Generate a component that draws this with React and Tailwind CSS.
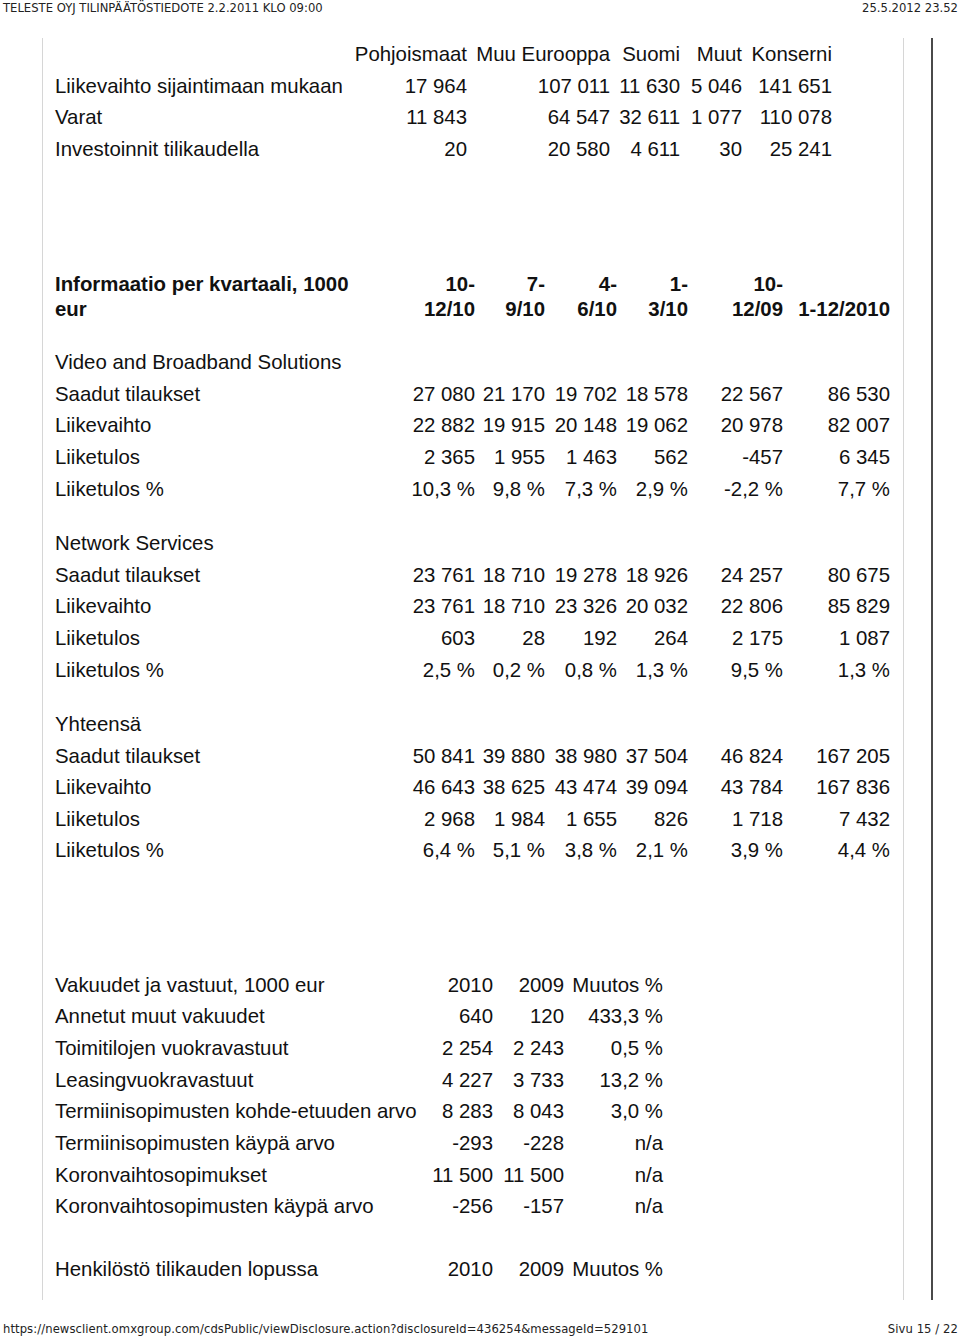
import React from "react";

const t1Cols = "grid-cols-[295px_117px_143px_70px_62px_90px]";
const t2Cols = "grid-cols-[350px_70px_70px_72px_71px_95px_107px]";
const t3Cols = "grid-cols-[370px_68px_71px_99px]";

const table1 = [
  ["Liikevaihto sijaintimaan mukaan", "17 964", "107 011", "11 630", "5 046", "141 651"],
  ["Varat", "11 843", "64 547", "32 611", "1 077", "110 078"],
  ["Investoinnit tilikaudella", "20", "20 580", "4 611", "30", "25 241"],
];

const sections = [
  {
    title: "Video and Broadband Solutions",
    rows: [
      ["Saadut tilaukset", "27 080", "21 170", "19 702", "18 578", "22 567", "86 530"],
      ["Liikevaihto", "22 882", "19 915", "20 148", "19 062", "20 978", "82 007"],
      ["Liiketulos", "2 365", "1 955", "1 463", "562", "-457", "6 345"],
      ["Liiketulos %", "10,3 %", "9,8 %", "7,3 %", "2,9 %", "-2,2 %", "7,7 %"],
    ],
  },
  {
    title: "Network Services",
    rows: [
      ["Saadut tilaukset", "23 761", "18 710", "19 278", "18 926", "24 257", "80 675"],
      ["Liikevaihto", "23 761", "18 710", "23 326", "20 032", "22 806", "85 829"],
      ["Liiketulos", "603", "28", "192", "264", "2 175", "1 087"],
      ["Liiketulos %", "2,5 %", "0,2 %", "0,8 %", "1,3 %", "9,5 %", "1,3 %"],
    ],
  },
  {
    title: "Yhteensä",
    rows: [
      ["Saadut tilaukset", "50 841", "39 880", "38 980", "37 504", "46 824", "167 205"],
      ["Liikevaihto", "46 643", "38 625", "43 474", "39 094", "43 784", "167 836"],
      ["Liiketulos", "2 968", "1 984", "1 655", "826", "1 718", "7 432"],
      ["Liiketulos %", "6,4 %", "5,1 %", "3,8 %", "2,1 %", "3,9 %", "4,4 %"],
    ],
  },
];

const table3 = [
  ["Vakuudet ja vastuut, 1000 eur", "2010", "2009", "Muutos %"],
  ["Annetut muut vakuudet", "640", "120", "433,3 %"],
  ["Toimitilojen vuokravastuut", "2 254", "2 243", "0,5 %"],
  ["Leasingvuokravastuut", "4 227", "3 733", "13,2 %"],
  ["Termiinisopimusten kohde-etuuden arvo", "8 283", "8 043", "3,0 %"],
  ["Termiinisopimusten käypä arvo", "-293", "-228", "n/a"],
  ["Koronvaihtosopimukset", "11 500", "11 500", "n/a"],
  ["Koronvaihtosopimusten käypä arvo", "-256", "-157", "n/a"],
];

function Row({ cols, cells }) {
  return (
    <div className={`grid ${cols} h-[31.67px] leading-[31.67px] whitespace-nowrap`}>
      {cells.map((c, i) => (
        <div key={i} className={i === 0 ? "text-left" : "text-right"}>
          {c}
        </div>
      ))}
    </div>
  );
}

const t2Head = [
  ["10-", "12/10"],
  ["7-", "9/10"],
  ["4-", "6/10"],
  ["1-", "3/10"],
  ["10-", "12/09"],
  ["\u00a0", "1-12/2010"],
];

export default function App() {
  return (
    <div className="relative w-[960px] h-[1341px] bg-white overflow-hidden">
      {/* header */}
      <div className="flex justify-between pl-[3px] pr-[2px] pt-[1px] h-[15px] leading-[14px] text-[11.6px] text-[#222] font-['DejaVu_Sans',sans-serif] whitespace-nowrap">
        <span>TELESTE OYJ TILINPÄÄTÖSTIEDOTE 2.2.2011 KLO 09:00</span>
        <span>25.5.2012 23.52</span>
      </div>

      {/* page body */}
      <div className="flex mt-[23px] h-[1262px]">
        <div className="ml-[42px] w-[862px] border-l border-r border-[#d6d6d6] pl-[12px] pt-[1px] text-[20.4px] text-[#111] font-['Liberation_Sans',Arial,sans-serif]">
          {/* table 1 */}
          <Row cols={t1Cols} cells={["", "Pohjoismaat", "Muu Eurooppa", "Suomi", "Muut", "Konserni"]} />
          {table1.map((r, i) => (
            <Row key={i} cols={t1Cols} cells={r} />
          ))}

          {/* table 2 header */}
          <div className={`grid ${t2Cols} mt-[106.6px] leading-[25px] font-bold whitespace-nowrap`}>
            <div>
              <div>Informaatio per kvartaali, 1000</div>
              <div>eur</div>
            </div>
            {t2Head.map((h, i) => (
              <div key={i} className="text-right">
                <div>{h[0]}</div>
                <div>{h[1]}</div>
              </div>
            ))}
          </div>

          {sections.map((s, si) => (
            <div key={si} className={si === 0 ? "mt-[24.7px]" : "mt-[22.7px]"}>
              <div className="h-[31.67px] leading-[31.67px]">{s.title}</div>
              {s.rows.map((r, i) => (
                <Row key={i} cols={t2Cols} cells={r} />
              ))}
            </div>
          ))}

          {/* table 3 */}
          <div className="mt-[102.7px]">
            {table3.map((r, i) => (
              <Row key={i} cols={t3Cols} cells={r} />
            ))}
          </div>
          <div className="mt-[30.6px]">
            <Row cols={t3Cols} cells={["Henkilöstö tilikauden lopussa", "2010", "2009", "Muutos %"]} />
          </div>
        </div>
        <div className="ml-[27px] w-[2px] bg-[#4a4a4a]" />
      </div>

      {/* footer */}
      <div className="flex justify-between pl-[3px] pr-[2px] mt-[22px] h-[14px] leading-[14px] text-[11.6px] tracking-[0.08px] text-[#222] font-['DejaVu_Sans',sans-serif] whitespace-nowrap">
        <span>https://newsclient.omxgroup.com/cdsPublic/viewDisclosure.action?disclosureId=436254&amp;messageId=529101</span>
        <span>Sivu 15 / 22</span>
      </div>
    </div>
  );
}
